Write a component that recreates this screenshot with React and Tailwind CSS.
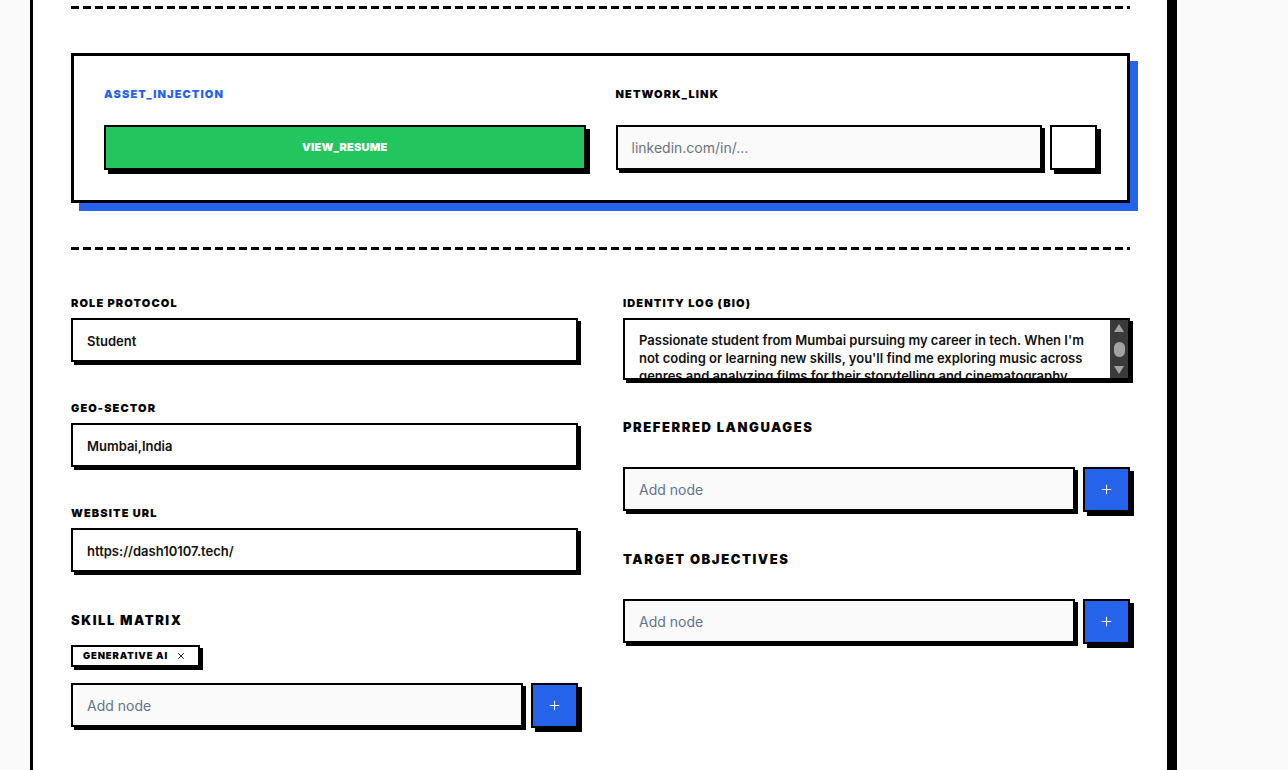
import { Plus, X } from 'lucide-react'

const DASH = 'h-[3px] w-full bg-[repeating-linear-gradient(90deg,#000_0_8px,transparent_8px_12px)]'

function Label({ children, big }) {
  return (
    <p className={big
      ? 'text-[13px] leading-[20px] font-black tracking-[0.12em] text-black uppercase'
      : 'text-[11px] leading-[16px] font-black tracking-[0.1em] text-black uppercase'}>
      {children}
    </p>
  )
}

function Field({ label, value }) {
  return (
    <div>
      <Label>{label}</Label>
      <div className="mt-[7px] h-[44px] flex items-center border-2 border-black bg-white px-[14px] pt-[3px] shadow-[3px_3px_0_#000] text-[13px] font-semibold text-[#111]">
        {value}
      </div>
    </div>
  )
}

function NodeInput() {
  return (
    <div className="flex gap-[8px]">
      <input
        placeholder="Add node"
        className="flex-1 min-w-0 h-[44px] border-2 border-black bg-[#fafafa] px-[14px] text-[14px] text-[#111] placeholder-[#64748b] outline-none shadow-[3px_3px_0_#000]"
      />
      <button className="w-[47px] h-[45px] shrink-0 flex items-center justify-center border-2 border-black bg-[#2563eb] text-white shadow-[4px_4px_0_#000]">
        <Plus size={15} strokeWidth={1.5} />
      </button>
    </div>
  )
}

function Scrollbar() {
  return (
    <div className="w-[18px] bg-[#3a3a3a] flex flex-col items-center justify-between py-[3px]">
      <svg width="12" height="10" viewBox="0 0 12 10"><path d="M6 1 L11 9 L1 9 Z" fill="#a3a3a3" /></svg>
      <div className="w-[11px] h-[15px] rounded-full bg-[#a3a3a3]" />
      <svg width="12" height="10" viewBox="0 0 12 10"><path d="M1 1 L11 1 L6 9 Z" fill="#a3a3a3" /></svg>
    </div>
  )
}

export default function App() {
  return (
    <div className="min-h-[770px] bg-[#fafafa] font-['Inter',sans-serif]">
      <div className="ml-[30px] w-[1140px] min-h-[770px] bg-white border-x-[3px] border-black shadow-[7px_0_0_#000] pl-[38px] pr-[37px] pt-[6px] pb-[40px]">

        <div className={DASH} />

        {/* Asset / network card */}
        <div className="mt-[44px] border-[3px] border-black bg-white shadow-[8px_8px_0_#2563eb] p-[30px]">
          <div className="grid grid-cols-2 gap-[30px]">
            <div>
              <p className="text-[11px] leading-[16px] font-black tracking-[0.1em] text-[#2563eb]">ASSET_INJECTION</p>
              <button className="mt-[23px] w-full h-[45px] border-2 border-black bg-[#22c55e] shadow-[4px_4px_0_#000] text-white text-[11px] font-black tracking-[0.02em]">
                VIEW_RESUME
              </button>
            </div>
            <div>
              <p className="text-[11px] leading-[16px] font-black tracking-[0.1em] text-black">NETWORK_LINK</p>
              <div className="mt-[23px] flex gap-[8px]">
                <input
                  placeholder="linkedin.com/in/..."
                  className="flex-1 min-w-0 h-[45px] border-2 border-black bg-[#fafafa] px-[14px] text-[14px] placeholder-[#6b7280] outline-none shadow-[3px_3px_0_#000]"
                />
                <button className="w-[47px] h-[45px] shrink-0 border-2 border-black bg-white shadow-[4px_4px_0_#000]" />
              </div>
            </div>
          </div>
        </div>

        <div className={`mt-[44px] ${DASH}`} />

        {/* Profile fields */}
        <div className="mt-[45px] grid grid-cols-2 gap-x-[45px]">
          <div className="flex flex-col gap-[38px]">
            <Field label="Role Protocol" value="Student" />
            <Field label="Geo-Sector" value="Mumbai,India" />
            <Field label="Website URL" value="https://dash10107.tech/" />
            <div>
              <Label big>Skill Matrix</Label>
              <div className="mt-[15px] flex">
                <span className="h-[22px] flex items-center gap-[8px] border-2 border-black bg-white pl-[10px] pr-[12px] shadow-[3px_3px_0_#000] text-[9.5px] font-black tracking-[0.09em] text-black">
                  GENERATIVE AI
                  <X size={10} strokeWidth={2} />
                </span>
              </div>
              <div className="mt-[16px]">
                <NodeInput />
              </div>
            </div>
          </div>

          <div className="flex flex-col">
            <div>
              <Label>Identity Log (Bio)</Label>
              <div className="mt-[7px] h-[62px] flex border-2 border-black bg-white shadow-[3px_3px_0_#000] overflow-hidden">
                <p className="flex-1 overflow-hidden pl-[14px] pr-[16px] pt-[11px] text-[13px] leading-[18px] font-semibold text-[#111]">
                  Passionate student from Mumbai pursuing my career in tech. When I'm not coding or learning new skills, you'll find me exploring music across genres and analyzing films for their storytelling and cinematography.
                </p>
                <Scrollbar />
              </div>
            </div>
            <div className="mt-[37px]">
              <Label big>Preferred Languages</Label>
              <div className="mt-[30px]">
                <NodeInput />
              </div>
            </div>
            <div className="mt-[37px]">
              <Label big>Target Objectives</Label>
              <div className="mt-[30px]">
                <NodeInput />
              </div>
            </div>
          </div>
        </div>
      </div>
    </div>
  )
}
